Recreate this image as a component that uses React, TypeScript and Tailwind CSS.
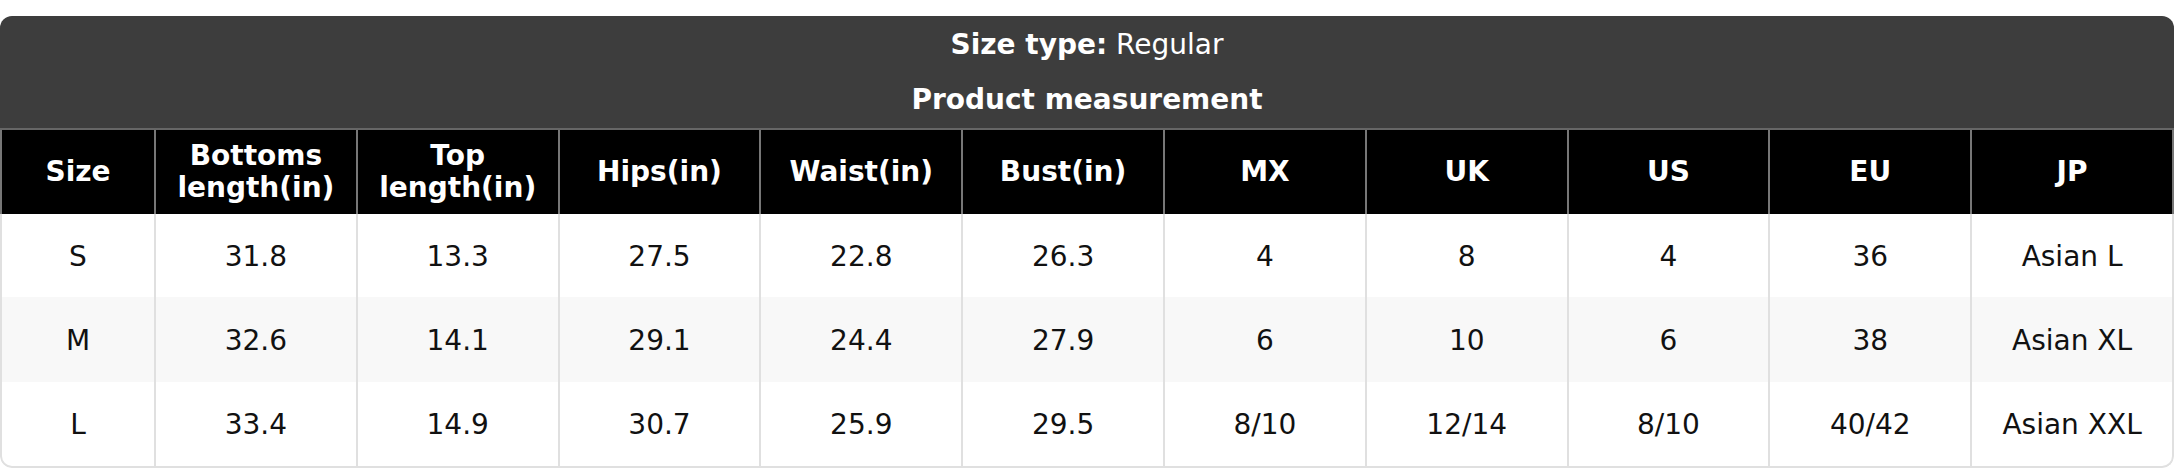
import React from "react";

const headers: string[][] = [
  ["Size"],
  ["Bottoms", "length(in)"],
  ["Top", "length(in)"],
  ["Hips(in)"],
  ["Waist(in)"],
  ["Bust(in)"],
  ["MX"],
  ["UK"],
  ["US"],
  ["EU"],
  ["JP"],
];

const rows: string[][] = [
  ["S", "31.8", "13.3", "27.5", "22.8", "26.3", "4", "8", "4", "36", "Asian L"],
  ["M", "32.6", "14.1", "29.1", "24.4", "27.9", "6", "10", "6", "38", "Asian XL"],
  ["L", "33.4", "14.9", "30.7", "25.9", "29.5", "8/10", "12/14", "8/10", "40/42", "Asian XXL"],
];

export default function App() {
  return (
    <div className="w-[2174px] h-[468px] bg-white pt-[16px] font-['DejaVu_Sans',sans-serif]">
      <div className="rounded-[12px] overflow-hidden">
        <div className="h-[114px] bg-[#3d3d3d] text-white text-center text-[28px] flex flex-col pt-[8px] gap-[14px] border-b-2 border-[#666666]">
          <div className="leading-[41px]">
            <span className="font-bold">Size type:</span> Regular
          </div>
          <div className="leading-[41px] font-bold">Product measurement</div>
        </div>
        <div className="grid grid-cols-[156px_repeat(10,minmax(0,1fr))]">
          {headers.map((h, i) => (
            <div
              key={i}
              className={
                "h-[84px] bg-black text-white font-bold text-[28px] leading-[32px] flex flex-col items-center justify-center text-center border-r-2 border-[#777777]" +
                (i === 0 ? " border-l-2" : "")
              }
            >
              {h.map((l, j) => (
                <div key={j}>{l}</div>
              ))}
            </div>
          ))}
          {rows.map((r, ri) =>
            r.map((c, ci) => (
              <div
                key={ri + "-" + ci}
                className={
                  "flex items-center justify-center pt-[2px] text-[28px] text-[#111111] border-r-2 border-[#e0e0e0]" +
                  (ci === 0 ? " border-l-2" : "") +
                  (ri === 1 ? " bg-[#f8f8f8] h-[85px]" : " bg-white") +
                  (ri === 0 ? " h-[83px]" : "") +
                  (ri === 2 ? " border-b-2 h-[86px]" : "") +
                  (ri === 2 && ci === 0 ? " rounded-bl-[12px]" : "") +
                  (ri === 2 && ci === 10 ? " rounded-br-[12px]" : "")
                }
              >
                {c}
              </div>
            ))
          )}
        </div>
      </div>
    </div>
  );
}
